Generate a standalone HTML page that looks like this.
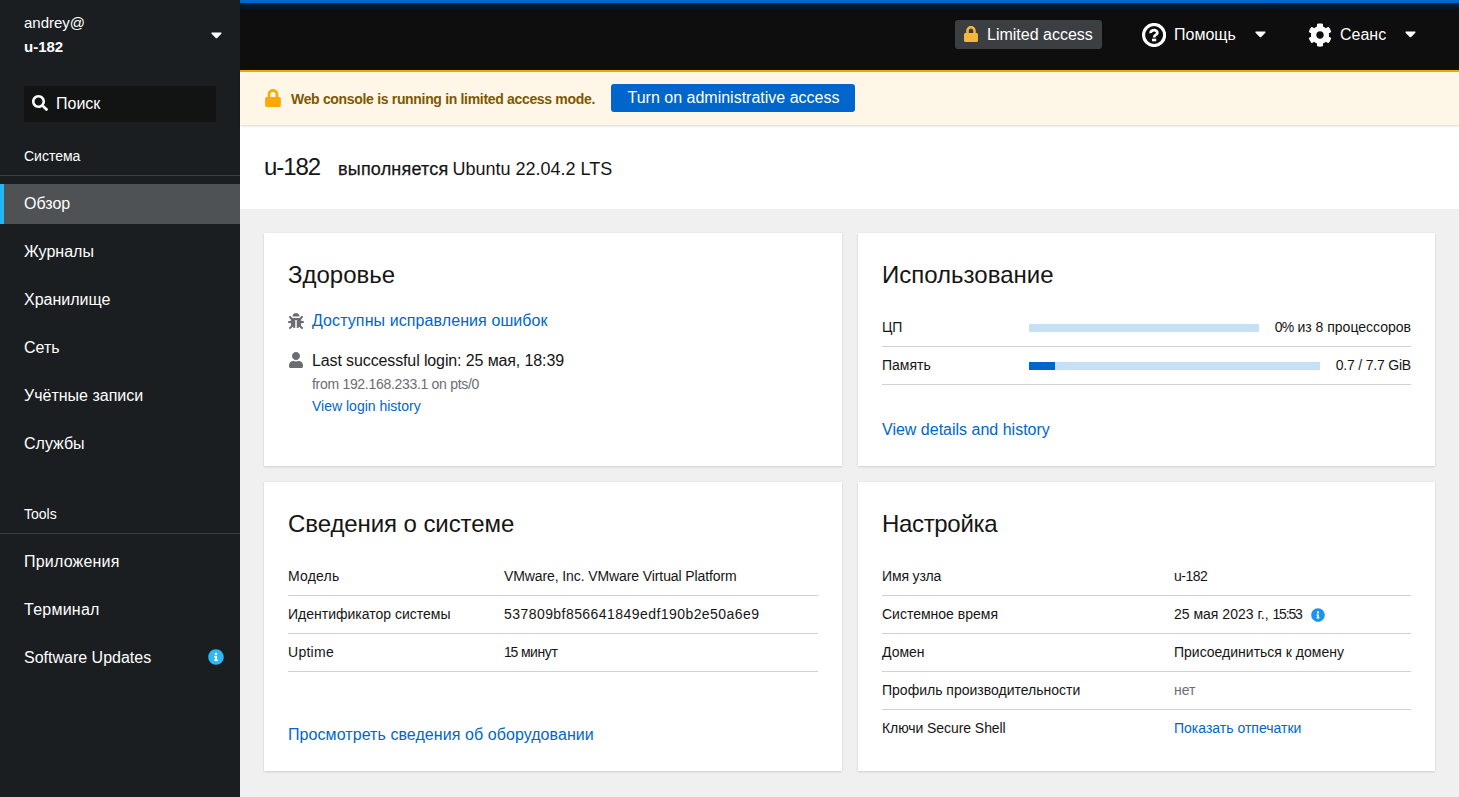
<!DOCTYPE html>
<html lang="ru">
<head>
<meta charset="utf-8">
<title>u-182 - Cockpit</title>
<style>
*{box-sizing:border-box}
html,body{margin:0;padding:0}
body{width:1459px;height:797px;overflow:hidden;position:relative;background:#f0f0f0;font-family:"Liberation Sans",sans-serif;font-size:16px;color:#151515}
a{color:#0066cc;text-decoration:none}
svg{display:block}
.abs{position:absolute}
.t{position:absolute;white-space:nowrap;line-height:1}

/* ---------- sidebar ---------- */
#nav{position:absolute;left:0;top:0;width:240px;height:797px;background:#1b1e21;color:#fff}
#nav .sec{left:24px;font-size:14px}
#nav .item{position:absolute;left:0;width:240px;height:40px;font-size:16px}
#nav .item span{position:absolute;left:24px;top:11px;line-height:18px;white-space:nowrap}
#nav .item.cur{background:#4f5255}
#nav .item.cur:before{content:"";position:absolute;left:0;top:0;width:4px;height:40px;background:#22b7f7}
#nav .hr{position:absolute;left:0;width:240px;height:1px;background:#3c3f42}
#search{position:absolute;left:24px;top:86px;width:192px;height:36px;background:#121414}

/* ---------- top bar ---------- */
#top{position:absolute;left:240px;top:0;width:1219px;height:70px;background:#0e0e0e;color:#fff}
#topline{position:absolute;left:240px;top:70px;width:1219px;height:2px;background:#f0ab00}

/* ---------- banner ---------- */
#banner{position:absolute;left:240px;top:72px;width:1219px;height:53px;background:#fef7e7;box-shadow:0 1px 2px rgba(3,3,3,.16);z-index:2}
#btn{position:absolute;left:371px;top:12px;width:244px;height:28px;background:#0066cc;border-radius:3px;color:#fff;font-size:16px;text-align:center;line-height:27px;padding-left:1px}

/* ---------- header ---------- */
#head{position:absolute;left:240px;top:125px;width:1219px;height:84px;background:#fff}

/* ---------- cards ---------- */
.card{position:absolute;background:#fff;box-shadow:0 1px 2px rgba(3,3,3,.12),0 0 2px rgba(3,3,3,.06)}
.card h2{position:absolute;left:24px;margin:0;font-weight:normal;font-size:24px;line-height:1;white-space:nowrap}
.row{position:absolute;left:24px;right:24px;height:38px;border-bottom:1px solid #d2d2d2;font-size:14px}
.row .k,.row .v{position:absolute;top:10px;line-height:16px;white-space:nowrap}
.row .k{left:0}
</style>
</head>
<body>

<!-- ================= SIDEBAR ================= -->
<div id="nav">
  <div class="t" style="left:24px;top:15px;font-size:15px">andrey@</div>
  <div class="t" style="left:24px;top:39px;font-size:15px;font-weight:bold">u-182</div>
  <svg class="abs caret" style="left:210.700px;top:26px" width="10.940" height="17.500" viewBox="0 0 320 512"><path fill="#fff" d="M31.300 192h257.300c17.800 0 26.700 21.500 14.100 34.100L174.100 354.800c-7.800 7.800-20.500 7.800-28.300 0L17.200 226.100C4.600 213.500 13.500 192 31.300 192z"/></svg>

  <div id="search">
    <svg class="abs" style="left:8px;top:9px" width="16" height="16" viewBox="0 0 512 512"><path fill="#fff" d="M505 442.700L405.300 343c-4.500-4.500-10.600-7-17-7H372c27.600-35.300 44-79.700 44-128C416 93.100 322.900 0 208 0S0 93.100 0 208s93.100 208 208 208c48.300 0 92.700-16.400 128-44v16.300c0 6.400 2.500 12.500 7 17l99.700 99.700c9.400 9.400 24.600 9.400 33.900 0l28.300-28.300c9.400-9.400 9.400-24.600.1-34zM208 336c-70.700 0-128-57.200-128-128 0-70.700 57.200-128 128-128 70.700 0 128 57.200 128 128 0 70.700-57.200 128-128 128z"/></svg>
    <div class="t" style="left:32px;top:9px;font-size:16px;line-height:18px">Поиск</div>
  </div>

  <div class="t sec" style="top:149px">Система</div>
  <div class="hr" style="top:175px"></div>
  <div class="item cur" style="top:184px"><span>Обзор</span></div>
  <div class="item" style="top:232px"><span>Журналы</span></div>
  <div class="item" style="top:280px"><span>Хранилище</span></div>
  <div class="item" style="top:328px"><span>Сеть</span></div>
  <div class="item" style="top:376px"><span>Учётные записи</span></div>
  <div class="item" style="top:424px"><span>Службы</span></div>

  <div class="t sec" style="top:507px">Tools</div>
  <div class="hr" style="top:533px"></div>
  <div class="item" style="top:542px"><span style="letter-spacing:.2px">Приложения</span></div>
  <div class="item" style="top:590px"><span style="letter-spacing:.25px">Терминал</span></div>
  <div class="item" style="top:638px"><span>Software Updates</span>
    <svg class="abs" style="left:208px;top:11px" width="16" height="16" viewBox="0 0 512 512"><circle cx="256" cy="256" r="200" fill="#fff"/><path fill="#2ab8f7" d="M256 8C119.043 8 8 119.083 8 256c0 136.997 111.043 248 248 248s248-111.003 248-248C504 119.083 392.957 8 256 8zm0 110c23.196 0 42 18.804 42 42s-18.804 42-42 42-42-18.804-42-42 18.804-42 42-42zm56 254c0 6.627-5.373 12-12 12h-88c-6.627 0-12-5.373-12-12v-24c0-6.627 5.373-12 12-12h12v-64h-12c-6.627 0-12-5.373-12-12v-24c0-6.627 5.373-12 12-12h64c6.627 0 12 5.373 12 12v100h12c6.627 0 12 5.373 12 12v24z"/></svg>
  </div>
</div>

<!-- ================= TOP BAR ================= -->
<div id="top">
  <div class="abs" style="left:0;top:0;width:1219px;height:3px;background:#0066cc"></div>
  <div class="abs" style="left:0;top:3px;width:1219px;height:7px;background:linear-gradient(#02223f,#03192d 60%,#04131f)"></div>

  <div class="abs" style="left:715px;top:20px;width:147px;height:29px;background:#3c3f42;border-radius:3px"></div>
  <svg class="abs" style="left:724px;top:26px" width="14" height="16" viewBox="0 0 448 512"><path fill="#f5b83a" d="M400 224h-24v-72C376 68.200 307.800 0 224 0S72 68.200 72 152v72H48c-26.500 0-48 21.500-48 48v192c0 26.500 21.500 48 48 48h352c26.500 0 48-21.500 48-48V272c0-26.500-21.500-48-48-48zm-104 0H152v-72c0-39.700 32.300-72 72-72s72 32.300 72 72v72z"/></svg>
  <div class="t" style="left:747px;top:27px;font-size:16px">Limited access</div>
  <svg class="abs" style="left:902px;top:23px" width="24" height="24" viewBox="0 0 24 24"><circle cx="12.100" cy="12" r="10.550" fill="none" stroke="#fff" stroke-width="3.100"/><path d="M8.800 10.200A3.300 2.500 0 1 1 14.200 11.600Q12.150 12.500 12.150 14.500" fill="none" stroke="#fff" stroke-width="2.700"/><rect x="10" y="15.700" width="4.200" height="2.600" fill="#fff"/></svg>
  <svg class="abs caret" style="left:1014.700px;top:25.100px" width="10.940" height="17.500" viewBox="0 0 320 512"><path fill="#fff" d="M31.300 192h257.300c17.800 0 26.700 21.500 14.100 34.100L174.100 354.800c-7.800 7.800-20.500 7.800-28.300 0L17.200 226.100C4.600 213.500 13.500 192 31.300 192z"/></svg>
  <svg class="abs" style="left:1068px;top:23px" width="24" height="24" viewBox="0 0 512 512"><path fill="#fff" d="M487.400 315.700l-42.600-24.600c4.300-23.200 4.300-47 0-70.200l42.600-24.600c4.900-2.800 7.100-8.600 5.500-14-11.100-35.600-30-67.800-54.700-94.600-3.800-4.100-10-5.100-14.800-2.300L380.800 110c-17.900-15.400-38.500-27.300-60.800-35.100V25.800c0-5.600-3.900-10.500-9.400-11.700-36.700-8.200-74.300-7.800-109.200 0-5.500 1.200-9.400 6.100-9.400 11.700V75c-22.200 7.900-42.800 19.800-60.800 35.100L88.700 85.500c-4.900-2.800-11-1.900-14.800 2.300-24.700 26.700-43.600 58.900-54.700 94.600-1.700 5.400.6 11.200 5.500 14L67.300 221c-4.300 23.200-4.300 47 0 70.200l-42.600 24.600c-4.900 2.800-7.100 8.600-5.500 14 11.100 35.600 30 67.800 54.700 94.600 3.800 4.100 10 5.100 14.800 2.300l42.600-24.600c17.900 15.400 38.500 27.300 60.800 35.100v49.200c0 5.600 3.900 10.500 9.400 11.700 36.700 8.200 74.300 7.800 109.200 0 5.500-1.200 9.400-6.100 9.400-11.700v-49.200c22.200-7.900 42.800-19.800 60.800-35.100l42.600 24.600c4.900 2.800 11 1.900 14.800-2.300 24.700-26.700 43.600-58.900 54.700-94.600 1.500-5.500-.7-11.300-5.600-14.100zM256 336c-44.100 0-80-35.900-80-80s35.900-80 80-80 80 35.900 80 80-35.900 80-80 80z"/></svg>
  <svg class="abs caret" style="left:1165.400px;top:25.100px" width="10.940" height="17.500" viewBox="0 0 320 512"><path fill="#fff" d="M31.300 192h257.300c17.800 0 26.700 21.500 14.100 34.100L174.100 354.800c-7.800 7.800-20.500 7.800-28.300 0L17.200 226.100C4.600 213.500 13.500 192 31.300 192z"/></svg>
  <div class="t" style="left:934px;top:27px;font-size:16px">Помощь</div>
  <div class="t" style="left:1100px;top:27px;font-size:16px">Сеанс</div>
</div>
<div id="topline"></div>

<!-- ================= BANNER ================= -->
<div id="banner">
  <svg class="abs" style="left:25px;top:17px" width="16" height="18" viewBox="0 0 448 512"><path fill="#fca908" d="M400 224h-24v-72C376 68.200 307.800 0 224 0S72 68.200 72 152v72H48c-26.500 0-48 21.500-48 48v192c0 26.500 21.500 48 48 48h352c26.500 0 48-21.500 48-48V272c0-26.500-21.500-48-48-48zm-104 0H152v-72c0-39.700 32.300-72 72-72s72 32.300 72 72v72z"/></svg>
  <div class="t" style="left:51px;top:19.500px;font-size:14px;font-weight:bold;color:#7d5800;letter-spacing:-.32px">Web console is running in limited access mode.</div>
  <div id="btn">Turn on administrative access</div>
</div>

<!-- ================= HEADER ================= -->
<div id="head">
  <div class="t" style="left:24px;top:30px;font-size:24px;letter-spacing:-1.1px">u-182</div>
  <div class="t" style="left:98px;top:35px;font-size:18px;letter-spacing:.2px;-webkit-text-stroke:.25px #151515">выполняется</div>
  <div class="t" style="left:212.500px;top:35px;font-size:18px">Ubuntu 22.04.2 LTS</div>
</div>

<!-- ================= CARDS ================= -->
<div class="card" id="c1" style="left:264px;top:233px;width:578px;height:233px">
  <h2 style="top:30px">Здоровье</h2>
  <svg class="abs" style="left:24px;top:80px" width="16" height="16" viewBox="0 0 512 512"><path fill="#6a6e73" d="M511.988 288.9c-.478 17.43-15.217 31.1-32.653 31.1H424v16c0 21.864-4.882 42.584-13.6 61.145l60.228 60.228c12.496 12.497 12.496 32.758 0 45.255-12.498 12.497-32.759 12.496-45.256 0l-54.736-54.736C345.886 467.965 314.351 480 280 480V236c0-6.627-5.373-12-12-12h-24c-6.627 0-12 5.373-12 12v244c-34.351 0-65.886-12.035-90.636-32.108l-54.736 54.736c-12.498 12.497-32.759 12.496-45.256 0-12.496-12.497-12.496-32.758 0-45.255l60.228-60.228C92.882 378.584 88 357.864 88 336v-16H32.666C15.230 320 .491 306.330.013 288.900-.484 270.816 14.028 256 32 256h56v-58.745l-46.628-46.628c-12.496-12.497-12.496-32.758 0-45.255 12.498-12.497 32.758-12.497 45.256 0L141.255 160h229.489l54.627-54.627c12.498-12.497 32.758-12.497 45.256 0 12.496 12.497 12.496 32.758 0 45.255L424 197.255V256h56c17.972 0 32.484 14.816 31.988 32.900zM257 0c-61.856 0-112 50.144-112 112h224C369 50.144 318.856 0 257 0z"/></svg>
  <a class="t" style="left:48px;top:80px;font-size:16px;letter-spacing:.09px">Доступны исправления ошибок</a>
  <svg class="abs" style="left:25px;top:119px" width="14" height="16" viewBox="0 0 448 512"><path fill="#6a6e73" d="M224 256c70.700 0 128-57.300 128-128S294.700 0 224 0 96 57.300 96 128s57.300 128 128 128zm89.600 32h-16.700c-22.200 10.200-46.900 16-72.900 16s-50.600-5.800-72.900-16h-16.700C60.200 288 0 348.200 0 422.400V464c0 26.500 21.500 48 48 48h352c26.500 0 48-21.500 48-48v-41.600c0-74.200-60.200-134.400-134.400-134.400z"/></svg>
  <div class="t" style="left:48px;top:120px;font-size:16px;letter-spacing:-.12px">Last successful login: 25 мая, 18:39</div>
  <div class="t" style="left:48px;top:144px;font-size:14px;color:#6a6e73;letter-spacing:-.3px">from 192.168.233.1 on pts/0</div>
  <a class="t" style="left:48px;top:166px;font-size:14px">View login history</a>
</div>

<div class="card" id="c2" style="left:858px;top:233px;width:577px;height:233px">
  <h2 style="top:30px">Использование</h2>
  <div class="row" style="top:76px"><span class="k">ЦП</span>
    <div class="abs" style="left:147px;top:15px;width:230px;height:8px;background:#c6e0f5"></div>
    <span class="v" style="right:0"><span style="letter-spacing:-.7px">0%</span> из 8 процессоров</span></div>
  <div class="row" style="top:114px"><span class="k">Память</span>
    <div class="abs" style="left:147px;top:15px;width:291px;height:8px;background:#c6e0f5"><div style="width:26px;height:8px;background:#0066cc"></div></div>
    <span class="v" style="right:0;letter-spacing:-.2px">0.7 / 7.7 GiB</span></div>
  <a class="t" style="left:24px;top:189px;font-size:16px">View details and history</a>
</div>

<div class="card" id="c3" style="left:264px;top:482px;width:578px;height:289px">
  <h2 style="top:30px;letter-spacing:-.08px">Сведения о системе</h2>
  <div class="row" style="top:76px"><span class="k" style="letter-spacing:.2px">Модель</span><span class="v" style="left:216px;letter-spacing:-.1px">VMware, Inc. VMware Virtual Platform</span></div>
  <div class="row" style="top:114px"><span class="k">Идентификатор системы</span><span class="v" style="left:216px;letter-spacing:.44px">537809bf856641849edf190b2e50a6e9</span></div>
  <div class="row" style="top:152px"><span class="k" style="letter-spacing:.27px">Uptime</span><span class="v" style="left:216px"><span style="letter-spacing:-1.3px">15</span> <span style="letter-spacing:-.4px">минут</span></span></div>
  <a class="t" style="left:24px;top:245px;font-size:16px;letter-spacing:.07px">Просмотреть сведения об оборудовании</a>
</div>

<div class="card" id="c4" style="left:858px;top:482px;width:577px;height:289px">
  <h2 style="top:30px;letter-spacing:-.33px">Настройка</h2>
  <div class="row" style="top:76px"><span class="k" style="letter-spacing:-.15px">Имя узла</span><span class="v" style="left:292px;letter-spacing:-.5px">u-182</span></div>
  <div class="row" style="top:114px"><span class="k">Системное время</span><span class="v" style="left:292px">25 мая 2023 г., <span style="letter-spacing:-1.150px">15:53</span></span>
    <svg class="abs" style="left:429px;top:12px" width="14" height="14" viewBox="0 0 512 512"><circle cx="256" cy="256" r="200" fill="#fff"/><path fill="#1a94f0" d="M256 8C119.043 8 8 119.083 8 256c0 136.997 111.043 248 248 248s248-111.003 248-248C504 119.083 392.957 8 256 8zm0 110c23.196 0 42 18.804 42 42s-18.804 42-42 42-42-18.804-42-42 18.804-42 42-42zm56 254c0 6.627-5.373 12-12 12h-88c-6.627 0-12-5.373-12-12v-24c0-6.627 5.373-12 12-12h12v-64h-12c-6.627 0-12-5.373-12-12v-24c0-6.627 5.373-12 12-12h64c6.627 0 12 5.373 12 12v100h12c6.627 0 12 5.373 12 12v24z"/></svg></div>
  <div class="row" style="top:152px"><span class="k">Домен</span><span class="v" style="left:292px">Присоединиться к домену</span></div>
  <div class="row" style="top:190px"><span class="k">Профиль производительности</span><span class="v" style="left:292px;color:#6a6e73">нет</span></div>
  <div class="row" style="top:228px;border-bottom:none"><span class="k" style="letter-spacing:-.07px">Ключи Secure Shell</span><a class="v" style="left:292px">Показать отпечатки</a></div>
</div>

</body>
</html>
